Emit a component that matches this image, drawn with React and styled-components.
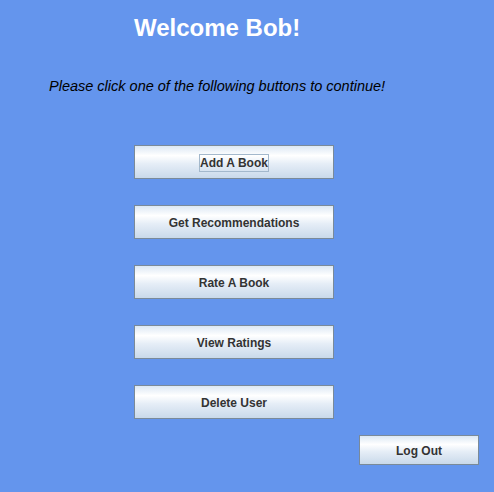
import React from 'react';
import styled, { createGlobalStyle } from 'styled-components';

const GlobalStyle = createGlobalStyle`
  html, body {
    margin: 0;
    padding: 0;
    background: #6495ed;
  }
`;

const MENU_ITEMS = [
  { label: 'Add A Book', focused: true },
  { label: 'Get Recommendations' },
  { label: 'Rate A Book' },
  { label: 'View Ratings' },
  { label: 'Delete User' },
];

export default function App() {
  return (
    <>
      <GlobalStyle />
      <StyledPage>
        <StyledTitle>Welcome Bob!</StyledTitle>
        <StyledPrompt>Please click one of the following buttons to continue!</StyledPrompt>

        <StyledMenu>
          {MENU_ITEMS.map((item) => (
            <StyledButton key={item.label} type="button">
              <StyledLabel focused={item.focused}>{item.label}</StyledLabel>
            </StyledButton>
          ))}
        </StyledMenu>

        <StyledFooter>
          <StyledButton type="button" small>
            <StyledLabel>Log Out</StyledLabel>
          </StyledButton>
        </StyledFooter>
      </StyledPage>
    </>
  );
}

const StyledPage = styled.div`
  width: 494px;
  height: 492px;
  background: #6495ed;
  display: flex;
  flex-direction: column;
  font-family: "Liberation Sans", Arial, sans-serif;
  overflow: hidden;
`;

const StyledTitle = styled.h1`
  margin: 14px 0 0 134px;
  font-size: 24px;
  line-height: 28px;
  font-weight: bold;
  color: #ffffff;
`;

const StyledPrompt = styled.p`
  margin: 34px 0 0 49px;
  font-size: 14.5px;
  line-height: 20px;
  font-style: italic;
  color: #000000;
`;

const StyledMenu = styled.div`
  display: flex;
  flex-direction: column;
  gap: 26px;
  margin: 49px 0 0 134px;
`;

const StyledButton = styled.button`
  box-sizing: border-box;
  width: ${({ small }) => (small ? '120px' : '200px')};
  height: ${({ small }) => (small ? '30px' : '34px')};
  padding: 2px 0 0;
  border: 1px solid #7a8a99;
  border-radius: 0;
  background: linear-gradient(
    to bottom,
    #dce8f4 0%,
    #ffffff 30%,
    #e6eef7 55%,
    #c9d9ea 100%
  );
  display: flex;
  align-items: center;
  justify-content: center;
  font-family: "Liberation Sans", Arial, sans-serif;
  font-size: 12px;
  font-weight: bold;
  color: #333333;
  cursor: pointer;
`;

const StyledLabel = styled.span`
  padding: 1px 0;
  border: 1px solid ${({ focused }) => (focused ? '#a3b8cc' : 'transparent')};
  line-height: 14px;
`;

const StyledFooter = styled.div`
  display: flex;
  justify-content: flex-end;
  padding-right: 15px;
  margin-top: 16px;
`;
